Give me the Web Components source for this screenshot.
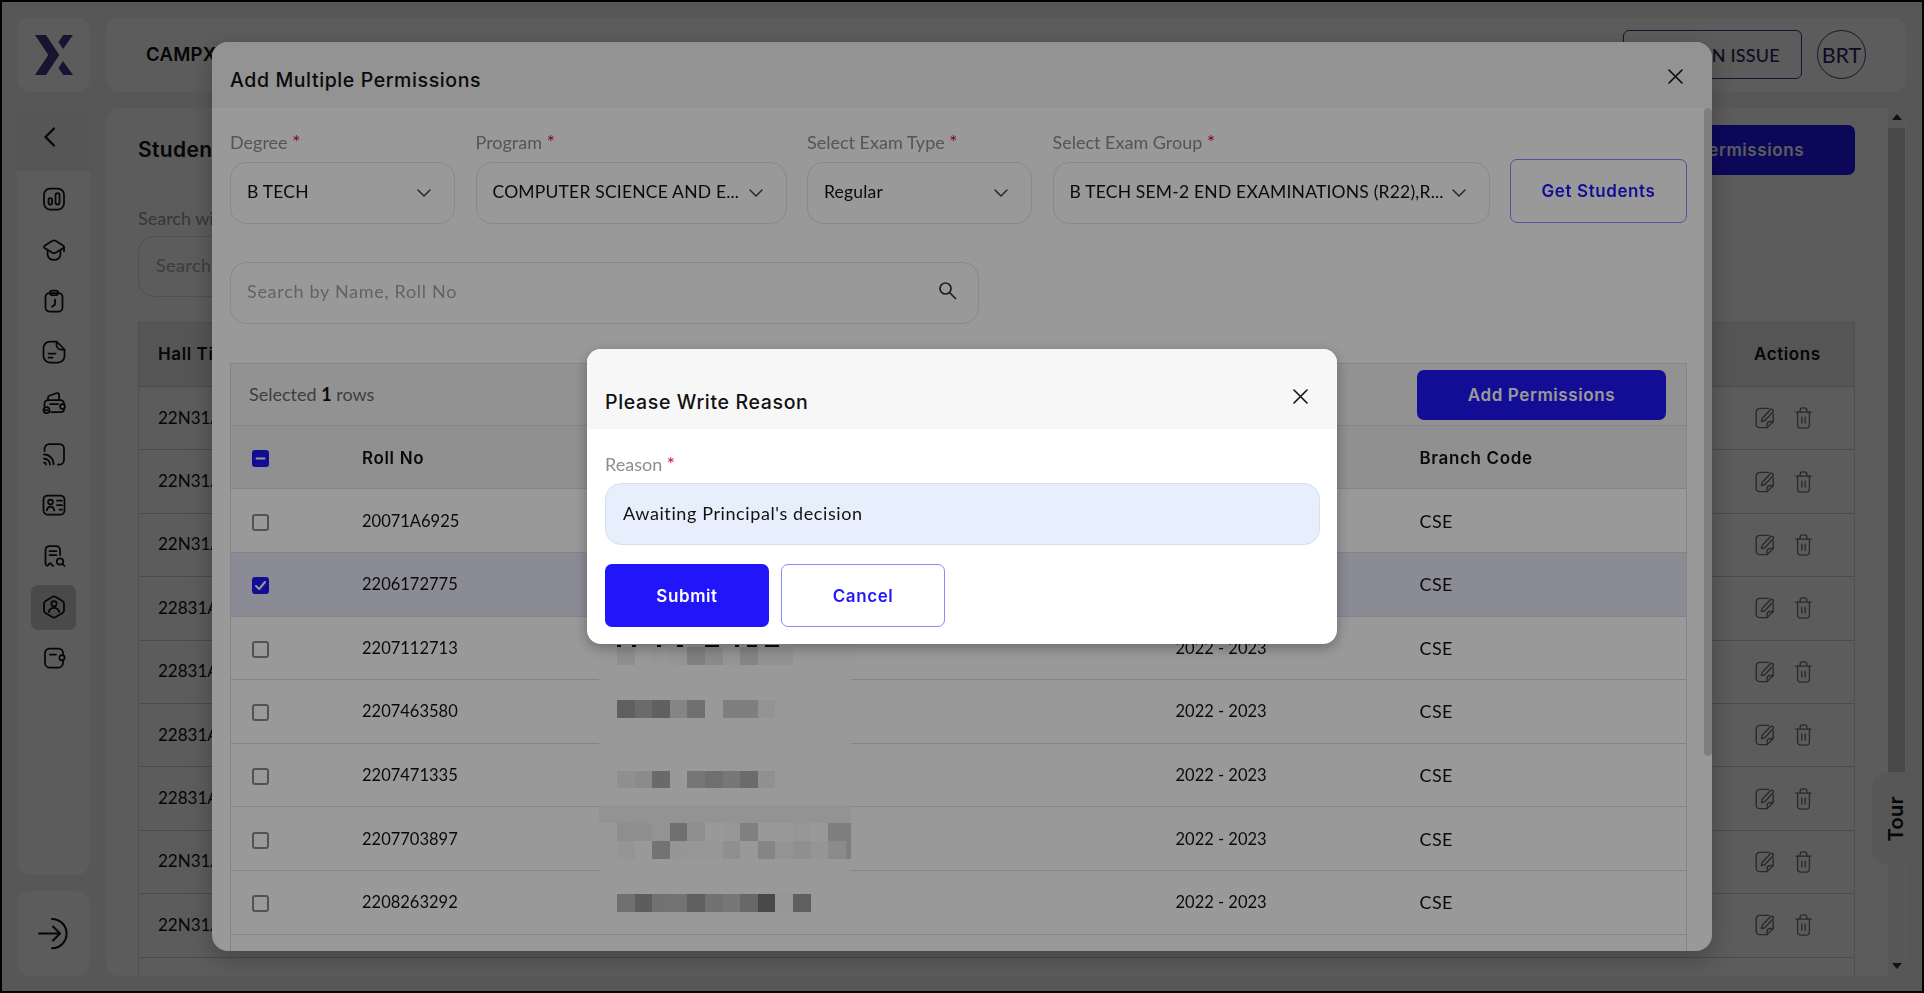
<!doctype html>
<html lang="en">
<head>
<meta charset="utf-8">
<title>CampX</title>
<style>
html,body{margin:0;height:100%;overflow:hidden;background:#000}
body{font-family:Lato,"Liberation Sans",sans-serif}
</style>
<script>
const HEAD='"Inter","Liberation Sans",sans-serif';
const BODY='Lato,"Liberation Sans",sans-serif';
const ICONS={
 chart:'<rect x="2" y="1.5" width="20" height="21" rx="6"/><rect x="6.5" y="11" width="3.6" height="6.5" rx="1.8"/><rect x="13.5" y="6" width="4" height="11.5" rx="2"/>',
 cap:'<path d="M10.5 2.8a3 3 0 0 1 3 0l7.6 4.7a1.6 1.6 0 0 1 0 2.8l-7.6 4.4a3 3 0 0 1-3 0L2.9 10.3a1.6 1.6 0 0 1 0-2.8z"/><path d="M5.6 12.5v4.3c0 3 3 5 6.4 5s6.4-2 6.4-5v-4.3"/><path d="M22 9v4"/>',
 clip:'<rect x="3.5" y="4" width="17" height="18.5" rx="4"/><rect x="8" y="1.5" width="8" height="4.5" rx="2"/><path d="M13 10.5v5l-3 2.2"/>',
 note:'<path d="M8 1.5h6.5l8 8V16a6.5 6.5 0 0 1-6.5 6.5H8A6.5 6.5 0 0 1 1.5 16V8A6.5 6.5 0 0 1 8 1.5z"/><path d="M14.5 1.5V5a4.5 4.5 0 0 0 4.5 4.5h3.5"/><path d="M6.5 13.5h7M6.5 17.5h4"/>',
 purse:'<path d="M6 9V6.6c0-.9.5-1.5 1.3-1.8l7-2.6c1.6-.6 2.8.3 2.8 1.9V9"/><path d="M2.5 15v-2.5A3.5 3.5 0 0 1 6 9h12.5a3.5 3.5 0 0 1 3.5 3.5V13m0 5.5a2.8 2.8 0 0 1-3 2.5H9"/><path d="M8 13h8"/><circle cx="4.5" cy="19" r="3"/><path d="M3.2 19h2.6"/><circle cx="20.5" cy="15.5" r="2.4"/>',
 cast:'<path d="M2.5 9V7a5 5 0 0 1 5-5h10a4.5 4.5 0 0 1 4.5 4.5V18a4.5 4.5 0 0 1-4.5 4.5H16"/><path d="M2 12.5a9.5 9.5 0 0 1 9.5 10"/><path d="M2 16.5a6 6 0 0 1 6 6"/><path d="M2 20.5a2 2 0 0 1 2 2"/>',
 idcard:'<rect x="1.5" y="2.5" width="21" height="19" rx="4"/><circle cx="8.5" cy="9" r="2.4"/><path d="M4.8 17.5c.4-2.6 1.8-4 3.7-4s3.3 1.4 3.7 4"/><path d="M15 7.5h5M15 12h5M17.5 16.5H20"/>',
 receipt:'<path d="M3.5 19V6a4 4 0 0 1 4-4H14a4 4 0 0 1 4 4v5"/><path d="M3.5 19c0 3 2.4 3.4 3.3 1.4.7-1.6 2-1.6 2.7 0 .4.9 1 1.4 1.8 1.4"/><path d="M7.5 7h7M7.5 11h7"/><circle cx="18" cy="17.5" r="3.2"/><path d="M20.5 20l2 2"/>',
 shield:'<path d="M10.2 1.9a3.4 3.4 0 0 1 3.6 0l6.7 4A3.4 3.4 0 0 1 22 8.8v6.4a3.4 3.4 0 0 1-1.5 2.9l-6.7 4a3.4 3.4 0 0 1-3.6 0l-6.7-4A3.4 3.4 0 0 1 2 15.2V8.8a3.4 3.4 0 0 1 1.5-2.9z"/><circle cx="12" cy="8.8" r="2.6"/><path d="M6.8 17c.6-2.8 2.6-4.2 5.2-4.2s4.6 1.4 5.2 4.2"/>',
 wallet:'<path d="M21 8V7a4.5 4.5 0 0 0-4.5-4.5h-9A4.5 4.5 0 0 0 3 7v10a4.5 4.5 0 0 0 4.5 4.5h9A4.5 4.5 0 0 0 21 17v-2"/><circle cx="20" cy="11.8" r="2.6"/><path d="M8 8.5h6"/>',
 back:'<path d="M10 1.5L1.5 10 10 18.5"/>',
 logout:'<path d="M1 15.5h21"/><path d="M15 8.5l7 7-7 7"/><path d="M14 1a14.6 14.6 0 0 1 0 29.2"/>',
 edit:'<path d="M17 2.5H6.5a4 4 0 0 0-4 4v14a4 4 0 0 0 4 4H15l7-7V9"/><path d="M8.5 17.5l.8-3.5 9.3-10a2 2 0 0 1 3 2.7l-9.3 10z"/><path d="M15 24.5v-3.5a3.5 3.5 0 0 1 3.5-3.5H22"/>',
 trash:'<path d="M1 6h18"/><path d="M6 6V4a3 3 0 0 1 3-3h2a3 3 0 0 1 3 3v2"/><path d="M3 6v15a4 4 0 0 0 4 4h6a4 4 0 0 0 4-4V6"/><path d="M8 12v7M12 12v7"/>',
 close:'<path d="M1 1l13 13M14 1L1 14"/>',
 chevron:'<path d="M1 1l6 6 6-6"/>',
 search:'<circle cx="7.5" cy="7.5" r="5.5"/><path d="M12 12l5.5 5.5"/>'
};
const VB={back:'0 0 12 20',logout:'0 0 32 32',edit:'0 0 24 27',trash:'0 0 20 26',close:'0 0 15 15',chevron:'0 0 14 8',search:'0 0 19 19'};
function def(name,fn){
 customElements.define(name,class extends HTMLElement{
  connectedCallback(){ if(this.shadowRoot) return; this.attachShadow({mode:'open'}).innerHTML=fn(this); }
 });
}
def('cx-icon',el=>{
 const n=el.getAttribute('name'),w=el.getAttribute('w')||24,h=el.getAttribute('h')||w,s=el.getAttribute('sw')||1.9;
 return `<style>:host{display:inline-flex;color:inherit;line-height:0}svg{display:block;fill:none;stroke:currentColor;stroke-linecap:round;stroke-linejoin:round}</style>
 <svg width="${w}" height="${h}" viewBox="${VB[n]||'0 0 24 24'}" stroke-width="${s}">${ICONS[n]}</svg>`;
});
def('cx-logo',()=>`<style>:host{display:block;line-height:0}svg{display:block}</style>
 <svg width="38" height="40" viewBox="0 0 38 40" fill="#3f3a85"><path d="M0 0h11l13.3 20L11 40H0l13.3-20z"/><path d="M28.3 0H38L28 14l-4.5-7z"/><path d="M23.5 33l4.5-7 10 14h-9.7z"/></svg>`);
def('cx-nav-item',el=>`<style>:host{display:flex;width:45px;height:45px;align-items:center;justify-content:center;border-radius:7px;color:#111;background:${el.hasAttribute('active')?'#cfcfcf':'transparent'}}</style>
 <cx-icon name="${el.getAttribute('icon')}" w="24" sw="1.75"></cx-icon>`);
def('cx-sidebar',()=>`<style>
 :host{display:grid;grid-template-rows:75px 1fr 85px;row-gap:16.5px;width:73px}
 .card{background:#fff;border-radius:14px;display:flex;align-items:center;justify-content:center;overflow:hidden}
 .nav{flex-direction:column;justify-content:flex-start}
 .back{height:62px;width:100%;background:#f1f1f1;display:flex;align-items:center;padding:0 0 6px 27px;box-sizing:border-box;color:#111;flex:none}
 .list{display:flex;flex-direction:column;gap:6.1px;padding-top:5.5px;align-items:center}
 .logout{color:#111}
</style>
 <div class="card"><cx-logo></cx-logo></div>
 <div class="card nav"><div class="back"><cx-icon name="back" w="12" h="20" sw="2.2"></cx-icon></div>
  <div class="list">
  <cx-nav-item icon="chart"></cx-nav-item><cx-nav-item icon="cap"></cx-nav-item><cx-nav-item icon="clip"></cx-nav-item><cx-nav-item icon="note"></cx-nav-item><cx-nav-item icon="purse"></cx-nav-item><cx-nav-item icon="cast"></cx-nav-item><cx-nav-item icon="idcard"></cx-nav-item><cx-nav-item icon="receipt"></cx-nav-item><cx-nav-item icon="shield" active></cx-nav-item><cx-nav-item icon="wallet"></cx-nav-item>
  </div></div>
 <div class="card logout"><cx-icon name="logout" w="32" sw="2"></cx-icon></div>`);
def('cx-topbar',()=>`<style>
 :host{display:flex;align-items:center;justify-content:space-between;height:75px;background:#fff;border-radius:14px;padding:0 40px 0 40px;box-sizing:border-box}
 .brand{font:600 18.5px ${HEAD};color:#111;letter-spacing:.3px;margin-top:-2px}
 .right{display:flex;gap:15px;align-items:center}
 .issue{width:179px;height:49px;box-sizing:border-box;border:1px solid #3f3a85;border-radius:6px;display:flex;align-items:center;justify-content:center;font:500 18px ${BODY};letter-spacing:.2px;color:#2d2660}
 .av{width:49px;height:49px;box-sizing:border-box;border:1px solid #3f3a85;border-radius:50%;display:flex;align-items:center;justify-content:center;font:400 21.5px ${BODY};color:#2d2660}
</style><div class="brand">CAMPX</div><div class="right"><div class="issue">RAISE AN ISSUE</div><div class="av">BRT</div></div>`);
def('cx-button',el=>{
 const v=el.getAttribute('variant')||'solid';
 return `<style>:host{display:inline-flex;box-sizing:border-box;align-items:center;justify-content:center;border-radius:7px;font:600 17px ${HEAD};letter-spacing:.6px;
 ${v==='solid'?'background:#2116f9;color:#fff;':'background:#fff;color:#2116f9;border:1px solid #8c86ff;'}
 width:var(--w,100%);height:var(--h,100%)}</style><slot></slot>`;
});
def('cx-student-row',el=>`<style>
 :host{display:grid;grid-template-columns:1fr 100px;align-items:center;height:63.4px;box-sizing:border-box;border-bottom:1px solid #d0d0d0;padding-left:19px;font:400 17px ${BODY};color:#111}
 .h{margin-top:-2px}
 .a{display:flex;gap:20px;align-items:center;color:#777}
</style><div class="h">${el.getAttribute('hall')}</div><div class="a"><cx-icon name="edit" w="21" h="24" sw="1.6"></cx-icon><cx-icon name="trash" w="17" h="22" sw="1.6"></cx-icon></div>`);
def('cx-main',()=>`<style>
 :host{display:block;position:relative;background:#fff;border-radius:14px;overflow:hidden;height:100%}
 .content{display:flex;flex-direction:column;height:100%;box-sizing:border-box;padding:17px 51px 0 32px}
 .head{display:flex;justify-content:space-between;align-items:center;height:50px}
 h1{margin:0 0 1px;font:600 21px ${HEAD};color:#111;letter-spacing:.35px}
 .add{--w:249px;--h:50px}
 .lbl{margin-top:33px;font:400 18px/21px ${BODY};color:#999;height:23px}
 .search{margin-top:5px;width:500px;height:61px;box-sizing:border-box;border:1px solid #ddd;border-radius:16px;display:flex;align-items:center;padding:0 0 3px 17px;color:#aaa;font:400 18px ${BODY};letter-spacing:.4px}
 .table{margin-top:25px;flex:1;border:solid #dcdcdc;border-width:0 1px}
 .th{height:65px;box-sizing:border-box;background:#ededed;border-top:1px solid #dcdcdc;border-bottom:1px solid #d0d0d0;display:grid;grid-template-columns:1fr 100px;align-items:center;padding:0 0 2px 19px;font:600 17px ${HEAD};color:#111;letter-spacing:.6px}
 .sb{position:absolute;right:1px;top:0;bottom:0;width:17px;background:#f4f4f4}
 .th-up,.th-dn{position:absolute;left:3.5px;width:0;height:0;border:5px solid transparent}
 .th-up{top:6px;border-bottom:6px solid #333;border-top:0}
 .th-dn{bottom:7px;border-top:6px solid #333;border-bottom:0}
 .thumb{position:absolute;left:0;right:0;top:20px;height:650px;background:#cdcdcd}
 .tour{position:absolute;right:0;top:664px;width:34px;height:93px;box-sizing:border-box;padding-left:13px;background:#f4f4f4;border-radius:16px 0 0 16px;display:flex;align-items:center;justify-content:center}
 .tour span{writing-mode:vertical-rl;transform:rotate(180deg);font:600 20px ${HEAD};color:#111;letter-spacing:.4px}
</style>
<div class="content">
 <div class="head"><h1>Students</h1><cx-button class="add">Add Permissions</cx-button></div>
 <div class="lbl">Search with Roll No</div>
 <div class="search">Search</div>
 <div class="table">
  <div class="th"><div>Hall Ticket</div><div>Actions</div></div>
  <cx-student-row hall="22N31A"></cx-student-row><cx-student-row hall="22N31A"></cx-student-row><cx-student-row hall="22N31A"></cx-student-row><cx-student-row hall="22831A"></cx-student-row><cx-student-row hall="22831A"></cx-student-row><cx-student-row hall="22831A"></cx-student-row><cx-student-row hall="22831A"></cx-student-row><cx-student-row hall="22N31A"></cx-student-row><cx-student-row hall="22N31A"></cx-student-row>
 </div>
</div>
<div class="sb"><i class="th-up"></i><div class="thumb"></div><i class="th-dn"></i></div>
<div class="tour"><span>Tour</span></div>`);
def('cx-overlay',()=>`<style>:host{position:fixed;inset:0;display:flex;align-items:center;justify-content:center;background:rgba(0,0,0,.4)}</style><slot></slot>`);
def('cx-select',el=>`<style>
 :host{display:flex;flex-direction:column;min-width:0}
 label{height:30px;font:400 18px/20px ${BODY};color:#8e8e8e}
 b{color:#c8102e;font-weight:400;font-size:19px}
 .box{height:62px;box-sizing:border-box;border:1px solid #e4e4e4;border-radius:16px;display:flex;align-items:center;justify-content:space-between;padding:0 23px 0 16px;gap:4px;font:400 17.5px ${BODY};letter-spacing:.2px;color:#111}
 .v{white-space:nowrap;margin-top:-3px}
 cx-icon{flex:none;color:#444}
</style><label>${el.getAttribute('label')} <b>*</b></label><div class="box"><span class="v">${el.getAttribute('value')}</span><cx-icon name="chevron" w="14" h="8" sw="1.5"></cx-icon></div>`);
def('cx-check',el=>{
 const s=el.getAttribute('state')||'off';
 return `<style>:host{display:flex;width:17px;height:17px;margin-top:3px;box-sizing:border-box;border-radius:3px;align-items:center;justify-content:center;
 ${s==='off'?'border:2px solid #8a8a8a;':'background:#2116f9;'}}svg{display:block;fill:none;stroke:#fff;stroke-width:2;stroke-linecap:round;stroke-linejoin:round}</style>
 ${s==='on'?'<svg width="13" height="13" viewBox="0 0 13 13"><path d="M2 7l3.2 3L11 3"/></svg>':s==='mixed'?'<svg width="13" height="13" viewBox="0 0 13 13"><path d="M2.5 6.5h8"/></svg>':''}`;
});
const ROWCOLS='grid-template-columns:110px 0 813.5px 244px 1fr';
def('cx-perm-row',el=>`<style>
 :host{display:grid;${ROWCOLS};align-items:center;height:63.6px;box-sizing:border-box;border-bottom:1px solid #dcdcdc;padding-left:21px;font:400 16.5px ${BODY};color:#111;${el.hasAttribute('selected')?'background:#e8e8fb;':''}}
 .c{font-size:18px;letter-spacing:.4px}
</style><cx-check state="${el.hasAttribute('selected')?'on':'off'}"></cx-check><div></div><div>${el.getAttribute('roll')}</div><div>2022 - 2023</div><div class="c">CSE</div>`);
def('cx-pixel-mask',()=>{
 const rows=[
  [6,18,[0x8f,0xa0,0x97,0x95,0x81,0x8b,0x95,0x85,0x93,0x93]],
  [35,18,[0x5f,0x6b,0x60,0x85,0x70,0x99,0x7f,0x7f,0x93]],
  [53,17,[0x8f,0x8b,0x6a,0x99,0x76,0x6f,0x77,0x6b,0x90]],
  [18,17,'band'],
  [0,18,[0x8e,0x8f,0x93,0x70,0x8e,0x9a,0x97,0x80,0x9e,0x9e,0x96,0x9a,0x7f,0x7f]],
  [0,18,[0x95,0xa0,0x73,0x95,0x97,0x97,0x8f,0x9c,0x85,0x94,0x8f,0x95,0x8b,0x7f]],
  [35,18,[0x70,0x5d,0x72,0x73,0x5f,0x72,0x77,0x67,0x48,0x97,0x5f,0x9f]]
 ];
 // greys above were read from the dimmed picture: undo the overlay's 0.6
 const g=v=>{const c=Math.min(255,Math.round(v/0.6));return `rgb(${c},${c},${c})`};
 return `<style>
 :host{display:block;position:absolute;left:368px;top:277px;width:252px;height:285px;overflow:hidden;background:#fff}
 .tick{position:absolute;left:18px;top:4px;width:165px;height:2px;background:linear-gradient(90deg,#111 0 4px,transparent 4px 15px,#111 15px 19px,transparent 19px 40px,#111 40px 44px,transparent 44px 60px,#111 60px 66px,transparent 66px 88px,#111 88px 92px,#111 94px 102px,transparent 102px 118px,#111 118px 122px,transparent 122px 130px,#111 130px 140px,transparent 140px 148px,#111 148px 162px,transparent 162px)}
 .r{display:flex;padding-left:18px}.b{background:${g(0x93)};margin-left:-18px;width:270px}
 i{display:block;flex:none;width:17.6px;height:100%}
 </style><div class="tick"></div>`+rows.map(([m,h,c])=>c==='band'?`<div class="r b" style="margin-top:${m}px;height:${h}px"></div>`:`<div class="r" style="margin-top:${m}px;height:${h}px">${c.map(v=>`<i style="background:${g(v)}"></i>`).join('')}</div>`).join('');
});
def('cx-perm-table',()=>`<style>
 :host{display:block;position:relative;border:solid #dcdcdc;border-width:1px 1px 0;margin-top:39px}
 .bar{height:62px;box-sizing:border-box;background:#f3f3f3;border-bottom:1px solid #dcdcdc;display:flex;align-items:center;justify-content:space-between;padding:0 20px 0 18px;font:400 18px ${BODY};color:#6a6a6a}
 .bar span{margin-top:-2px}
 .bar b{color:#111;font-weight:700}
 .add{--w:249px;--h:50px}
 .th{display:grid;${ROWCOLS};align-items:center;height:63.4px;box-sizing:border-box;background:#f0f0f0;border-bottom:1px solid #dcdcdc;padding-left:21px;font:600 17px ${HEAD};color:#111;letter-spacing:.65px}
 .th div{margin-top:2px}
 .more{height:40px}
</style>
 <div class="bar"><span>Selected <b>1</b> rows</span><cx-button class="add">Add Permissions</cx-button></div>
 <div class="th"><cx-check state="mixed"></cx-check><div></div><div>Roll No</div><div></div><div>Branch Code</div></div>
 <cx-perm-row roll="20071A6925"></cx-perm-row><cx-perm-row roll="2206172775" selected></cx-perm-row><cx-perm-row roll="2207112713"></cx-perm-row><cx-perm-row roll="2207463580"></cx-perm-row><cx-perm-row roll="2207471335"></cx-perm-row><cx-perm-row roll="2207703897"></cx-perm-row><cx-perm-row roll="2208263292"></cx-perm-row>
 <div class="more"></div>
 <cx-pixel-mask></cx-pixel-mask>`);
def('cx-modal',()=>`<style>
 :host{display:block;position:relative;width:1500px;height:909px;background:#fff;border-radius:16px;overflow:hidden;box-shadow:0 8px 24px rgba(0,0,0,.25)}
 .hd{height:66px;background:#f5f5f5;display:flex;align-items:center;justify-content:space-between;padding:0 29px 0 18px}
 h2{margin:0;font:500 19.5px ${HEAD};color:#111;letter-spacing:.6px;margin-top:10px}
 .bd{padding:24px 25px 0 18px}
 .form{display:grid;grid-template-columns:225px 311px 225px 437px 177px;gap:20.5px;align-items:start}
 .get{margin-top:27px;--h:64px;--w:177px}
 .search{margin-top:38px;width:749px;height:62px;box-sizing:border-box;border:1px solid #e4e4e4;border-radius:16px;display:flex;align-items:center;justify-content:space-between;padding:0 21px 0 16px;font:400 18px ${BODY};letter-spacing:.7px;color:#a6a6a6}
 .search span,.search cx-icon{margin-top:-5px}
 .search cx-icon{color:#333}
 .thumb{position:absolute;right:0;top:66px;width:8px;height:648px;background:#d4d4d4;border-radius:5px}
 .x{color:#111;margin-top:2px}
</style>
 <div class="hd"><h2>Add Multiple Permissions</h2><cx-icon class="x" name="close" w="15" sw="1.6"></cx-icon></div>
 <div class="bd">
  <div class="form">
   <cx-select label="Degree" value="B TECH"></cx-select>
   <cx-select label="Program" value="COMPUTER SCIENCE AND E..."></cx-select>
   <cx-select label="Select Exam Type" value="Regular"></cx-select>
   <cx-select label="Select Exam Group" value="B TECH SEM-2 END EXAMINATIONS (R22),R..."></cx-select>
   <cx-button class="get" variant="outline">Get Students</cx-button>
  </div>
  <div class="search"><span>Search by Name, Roll No</span><cx-icon name="search" w="19" sw="1.7"></cx-icon></div>
  <cx-perm-table></cx-perm-table>
 </div>
 <div class="thumb"></div>`);
def('cx-dialog',()=>`<style>
 :host{display:block;width:750px;height:295px;background:#fff;border-radius:14px;overflow:hidden;box-shadow:0 4px 14px rgba(0,0,0,.3)}
 .hd{height:80px;background:#f7f7f7;display:flex;justify-content:space-between;padding:0 29px 0 18px;box-sizing:border-box}
 h3{margin:41px 0 0;font:500 19.5px/24px ${HEAD};color:#111;letter-spacing:.65px}
 .x{margin-top:40px;color:#111}
 .bd{padding:24px 17px 0 18px}
 label{display:block;font:400 18px/22px ${BODY};color:#8e8e8e}
 b{color:#c8102e;font-weight:400;font-size:19px}
 .in{margin-top:8px;height:62px;box-sizing:border-box;background:#e8effc;border:1px solid #d5dff0;border-radius:16px;display:flex;align-items:center;padding:0 17px;font:400 18px ${BODY};letter-spacing:.6px;color:#111}
 .in span{margin-top:-3px}
 .btns{margin-top:19px;display:flex;gap:12px}
 .s{--w:164px;--h:63px}
</style>
 <div class="hd"><h3>Please Write Reason</h3><cx-icon class="x" name="close" w="15" sw="1.6"></cx-icon></div>
 <div class="bd">
  <label>Reason <b>*</b></label>
  <div class="in"><span>Awaiting Principal's decision</span></div>
  <div class="btns"><cx-button class="s">Submit</cx-button><cx-button class="s" variant="outline">Cancel</cx-button></div>
 </div>`);
def('cx-app',()=>`<style>
 :host{display:grid;grid-template-columns:73px 1fr;grid-template-rows:75px 1fr;column-gap:16px;row-gap:16px;height:100vh;box-sizing:border-box;border:2px solid #000;padding:15px 16px 15px 15px;background:#f4f4f4}
 cx-sidebar{grid-row:1/3}
 .s{min-height:0}
</style><cx-sidebar></cx-sidebar><cx-topbar></cx-topbar><div class="s"><cx-main></cx-main></div>`);
</script>
</head>
<body>
<cx-app></cx-app>
<cx-overlay>
 <cx-modal></cx-modal>
</cx-overlay>
<cx-overlay>
 <cx-dialog></cx-dialog>
</cx-overlay>
</body>
</html>
